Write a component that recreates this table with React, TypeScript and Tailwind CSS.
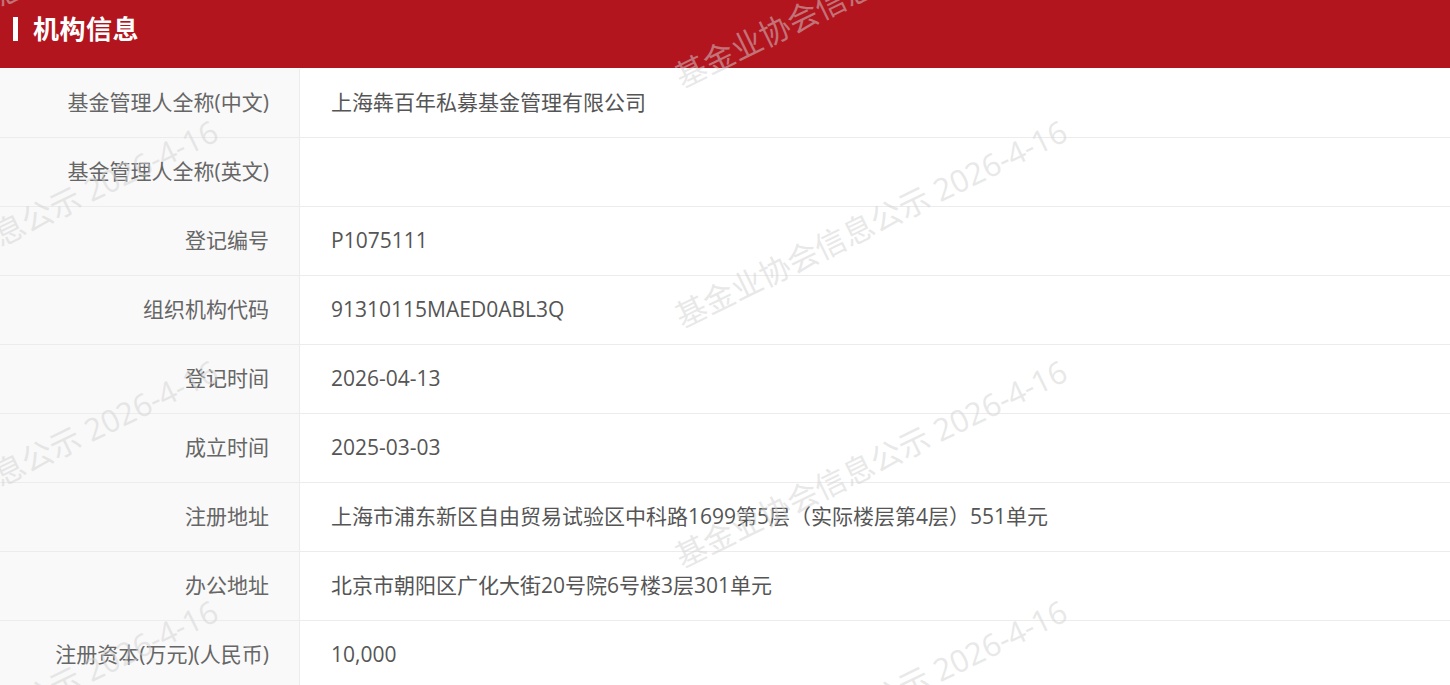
import React from "react";

const rows: [string, string][] = [
  ["基金管理人全称(中文)", "上海犇百年私募基金管理有限公司"],
  ["基金管理人全称(英文)", ""],
  ["登记编号", "P1075111"],
  ["组织机构代码", "91310115MAED0ABL3Q"],
  ["登记时间", "2026-04-13"],
  ["成立时间", "2025-03-03"],
  ["注册地址", "上海市浦东新区自由贸易试验区中科路1699第5层（实际楼层第4层）551单元"],
  ["办公地址", "北京市朝阳区广化大街20号院6号楼3层301单元"],
  ["注册资本(万元)(人民币)", "10,000"],
];

const marks: { x: number; y: number }[] = [];
for (const x of [-165, 684]) {
  for (const y of [-148, 92, 332, 572, 812]) {
    marks.push({ x, y });
  }
}

export default function App() {
  return (
    <div
      className="relative w-[1450px] h-[685px] overflow-hidden bg-white"
      style={{ fontFamily: '"Open Sans", "Noto Sans CJK SC", sans-serif' }}
    >
      <div className="h-[68px] bg-[#b3151f] flex items-start pt-[17px] pl-[13px]">
        <div className="w-[5px] h-[24px] bg-white mr-[15px]" />
        <div className="text-white text-[26px] font-bold leading-[24px] tracking-[0.5px]">机构信息</div>
      </div>
      <div className="pt-[1px]">
        {rows.map(([k, v]) => (
          <div key={k} className="flex h-[69px] border-b border-[#ececec]">
            <div className="w-[300px] shrink-0 bg-[#f9f9f9] border-r border-[#ececec] flex items-center justify-end pr-[30px] text-[21px] text-[#666]">
              {k}
            </div>
            <div className="flex-1 flex items-center pl-[31px] text-[21px] text-[#555]">{v}</div>
          </div>
        ))}
      </div>
      <div className="pointer-events-none absolute inset-0">
        {marks.map((m, i) => (
          <div
            key={i}
            className="absolute whitespace-nowrap text-[31px] leading-none text-[rgba(210,210,210,0.5)] origin-bottom-left rotate-[-26deg]"
            style={{ left: m.x, top: m.y - 31 }}
          >
            基金业协会信息公示 2026-4-16
          </div>
        ))}
      </div>
    </div>
  );
}
